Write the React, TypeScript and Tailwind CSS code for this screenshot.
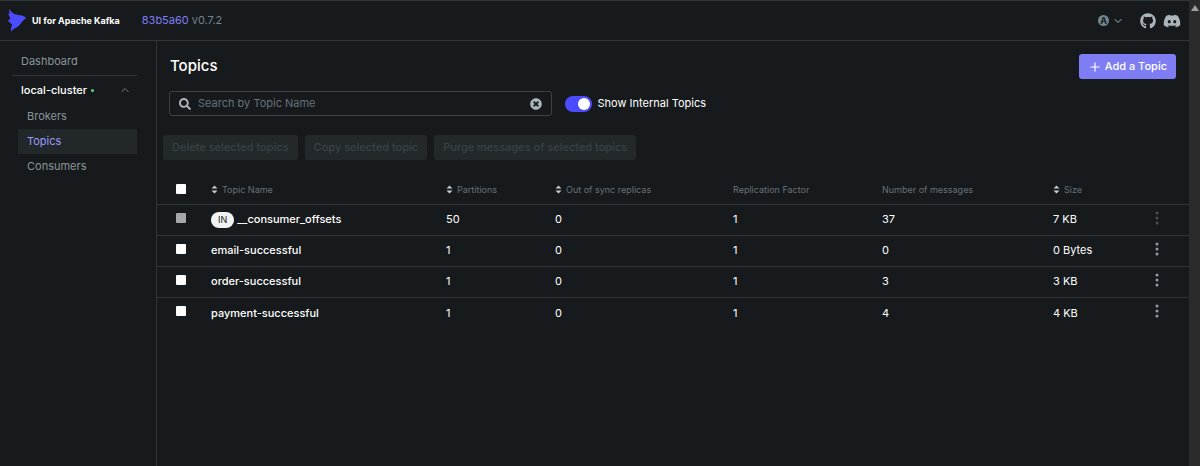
import { useState } from "react";
import { FaDiscord, FaGithub, FaSearch, FaTimesCircle } from "react-icons/fa";
import { ChevronDown, ChevronUp, Plus } from "lucide-react";

const topics = [
  { name: "__consumer_offsets", internal: true, partitions: 50, outOfSync: 0, replication: 1, messages: 37, size: "7 KB" },
  { name: "email-successful", internal: false, partitions: 1, outOfSync: 0, replication: 1, messages: 0, size: "0 Bytes" },
  { name: "order-successful", internal: false, partitions: 1, outOfSync: 0, replication: 1, messages: 3, size: "3 KB" },
  { name: "payment-successful", internal: false, partitions: 1, outOfSync: 0, replication: 1, messages: 4, size: "4 KB" },
];

const columns = [
  { label: "Topic Name", sortable: true },
  { label: "Partitions", sortable: true },
  { label: "Out of sync replicas", sortable: true },
  { label: "Replication Factor", sortable: false },
  { label: "Number of messages", sortable: false },
  { label: "Size", sortable: true },
];

const bulkActions = ["Delete selected topics", "Copy selected topic", "Purge messages of selected topics"];

function Logo() {
  return (
    <svg width="18" height="23" viewBox="0 0 54 69" fill="#4c4cff" aria-hidden="true">
      <path d="M4 0 C9 8 15 14 21 16 L43 20 C48 21 52 24 54 27 L44 36 C38 42 35 51 27 55 C20 58 14 62 9 68 C8 61 9 53 13 47 L0 36 L7 28 L0 14 L6 13 C4 9 3 4 4 0 Z" />
    </svg>
  );
}

function SortIcon() {
  return (
    <svg width="7" height="9" viewBox="0 0 7 9" fill="#c7cdd0" aria-hidden="true">
      <path d="M3.5 0.5 L6.5 3.5 H0.5 Z M3.5 8.5 L0.5 5.5 H6.5 Z" />
    </svg>
  );
}

function DotsIcon() {
  return (
    <svg width="4" height="14" viewBox="0 0 4 14" fill="currentColor" aria-hidden="true">
      <circle cx="2" cy="2" r="1.5" />
      <circle cx="2" cy="7" r="1.5" />
      <circle cx="2" cy="12" r="1.5" />
    </svg>
  );
}

function Checkbox({ label, disabled = false }: { label: string; disabled?: boolean }) {
  return (
    <input
      type="checkbox"
      aria-label={label}
      disabled={disabled}
      className="block size-[10px] appearance-none rounded-[1px] bg-white checked:bg-[#4c4cff] disabled:bg-[#a5a8a8]"
    />
  );
}

function Sidebar() {
  return (
    <nav className="w-[157px] shrink-0 border-r border-[#2f3639] py-2 pr-[19px] pl-3 text-[#8a959b]">
      <a href="#dashboard" className="block border-b border-[#2f3639] px-[9px] pt-1 pb-[6px] leading-4">
        Dashboard
      </a>
      <button type="button" className="flex h-7 w-full items-center pr-[6px] pl-[9px] font-medium text-white">
        local-cluster
        <span className="ml-1 size-[3px] rounded-full bg-[#5cd685]" />
        <ChevronUp size={12} className="ml-auto text-[#73848c]" />
      </button>
      <div className="ml-[6px] leading-[25px]">
        <a href="#brokers" className="block px-[9px]">Brokers</a>
        <a href="#topics" className="block bg-[#22282a] px-[9px] text-[#9b9bfa]">Topics</a>
        <a href="#consumers" className="block px-[9px]">Consumers</a>
      </div>
    </nav>
  );
}

export default function App() {
  const [search, setSearch] = useState("");
  const [showInternal, setShowInternal] = useState(true);

  const visible = topics.filter(t => (showInternal || !t.internal) && t.name.includes(search));

  return (
    <div className="flex min-h-screen bg-[#171a1c] font-['Inter',sans-serif] text-[11px] text-white">
      <div className="flex min-w-0 flex-1 flex-col">
        {/* Top bar */}
        <header className="flex h-[41px] items-center border-y border-[#2f3639] px-2">
          <Logo />
          <span className="ml-[6px] text-[9px] font-bold">UI for Apache Kafka</span>
          <a href="#commit" className="ml-[22px] text-[#7e7df3]">83b5a60</a>
          <span className="ml-[3px] text-[#73848c]">v0.7.2</span>
          <div className="ml-auto flex items-center text-[#abb5ba]">
            <button type="button" aria-label="Theme" className="mr-4 flex items-center gap-[3px]">
              <span className="flex size-[11px] items-center justify-center rounded-full bg-[#73848c] text-[9px] font-bold text-[#171a1c]">
                A
              </span>
              <ChevronDown size={12} />
            </button>
            <a href="#github" aria-label="GitHub" className="mr-[7px]"><FaGithub size={16} /></a>
            <a href="#discord" aria-label="Discord"><FaDiscord size={18} /></a>
          </div>
        </header>

        <div className="flex flex-1">
          <Sidebar />

          <main className="min-w-0 flex-1">
            <div className="flex items-center justify-between px-[13px] pt-[13px]">
              <h1 className="text-[15px] font-medium">Topics</h1>
              <button type="button" className="flex h-[25px] items-center gap-[3px] rounded-[3px] bg-[#7e7df3] px-[9px] font-medium">
                <Plus size={14} />
                Add a Topic
              </button>
            </div>

            {/* Search */}
            <div className="mt-3 flex items-center pl-3">
              <div className="flex h-[25px] w-3/8 items-center rounded-[3px] border border-[#394246] px-[9px] text-[#abb5ba]">
                <FaSearch size={12} className="shrink-0" />
                <input
                  type="text"
                  aria-label="Search by Topic Name"
                  value={search}
                  onChange={e => setSearch(e.target.value)}
                  placeholder="Search by Topic Name"
                  className="mx-[7px] min-w-0 flex-1 bg-transparent text-white outline-none placeholder:text-[#65727a]"
                />
                <button type="button" aria-label="Clear search" onClick={() => setSearch("")} className="shrink-0">
                  <FaTimesCircle size={12} />
                </button>
              </div>
              <label className="ml-[13px] flex items-center gap-[6px]">
                <input
                  type="checkbox"
                  checked={showInternal}
                  onChange={e => setShowInternal(e.target.checked)}
                  className="peer sr-only"
                />
                <span className="flex h-4 w-[27px] items-center rounded-full bg-[#394246] px-[2px] peer-checked:justify-end peer-checked:bg-[#4c4cff]">
                  <span className="size-3 rounded-full bg-white" />
                </span>
                Show Internal Topics
              </label>
            </div>

            <div className="mt-[19px] flex gap-[7px] pl-[6px]">
              {bulkActions.map(action => (
                <button
                  key={action}
                  type="button"
                  disabled
                  className="h-[25px] rounded-[3px] bg-[#23292b] px-[9px] font-medium text-[#394246]"
                >
                  {action}
                </button>
              ))}
            </div>

            {/* Topics table */}
            <table className="mt-4 w-full table-fixed text-left">
              <colgroup>
                <col className="w-[46px]" />
                <col className="w-[235px]" />
                <col className="w-[109px]" />
                <col className="w-[178px]" />
                <col className="w-[149px]" />
                <col className="w-[171px]" />
                <col className="w-[104px]" />
                <col className="w-[40px]" />
              </colgroup>
              <thead>
                <tr className="h-7 border-b border-[#2f3639]">
                  <th className="pb-[2px] pl-[19px]"><Checkbox label="Select all topics" /></th>
                  {columns.map(col => (
                    <th key={col.label} className="px-2 text-[9px] font-normal text-[#65727a]">
                      {col.sortable ? (
                        <button type="button" className="flex items-center gap-1">
                          <SortIcon />
                          {col.label}
                        </button>
                      ) : (
                        col.label
                      )}
                    </th>
                  ))}
                  <th />
                </tr>
              </thead>
              <tbody>
                {visible.map(topic => (
                  <tr key={topic.name} className="h-[31px] border-b border-[#2f3639] last:border-b-0">
                    <td className="pb-[3px] pl-[19px]">
                      <Checkbox label={`Select ${topic.name}`} disabled={topic.internal} />
                    </td>
                    <td className="px-2 font-medium">
                      <a href="#topic" className="flex items-center gap-[3px]">
                        {topic.internal && (
                          <span className="rounded-full bg-[#f1f2f3] px-[7px] text-[9px] leading-4 font-normal text-[#171a1c]">
                            IN
                          </span>
                        )}
                        {topic.name}
                      </a>
                    </td>
                    <td className="px-2">{topic.partitions}</td>
                    <td className="px-2">{topic.outOfSync}</td>
                    <td className="px-2">{topic.replication}</td>
                    <td className="px-2">{topic.messages}</td>
                    <td className="px-2">{topic.size}</td>
                    <td className="pb-[3px] pl-[6px]">
                      <button
                        type="button"
                        aria-label={`Actions for ${topic.name}`}
                        disabled={topic.internal}
                        className="block text-[#8f9ca3] disabled:text-[#454f54]"
                      >
                        <DotsIcon />
                      </button>
                    </td>
                  </tr>
                ))}
              </tbody>
            </table>
          </main>
        </div>
      </div>

      {/* Scroll track */}
      <div className="flex w-[11px] shrink-0 justify-center bg-[#2b2b2b] pt-[5px]">
        <svg width="8" height="6" viewBox="0 0 8 6" fill="#9f9f9f" aria-hidden="true">
          <path d="M4 0 L8 6 H0 Z" />
        </svg>
      </div>
    </div>
  );
}
